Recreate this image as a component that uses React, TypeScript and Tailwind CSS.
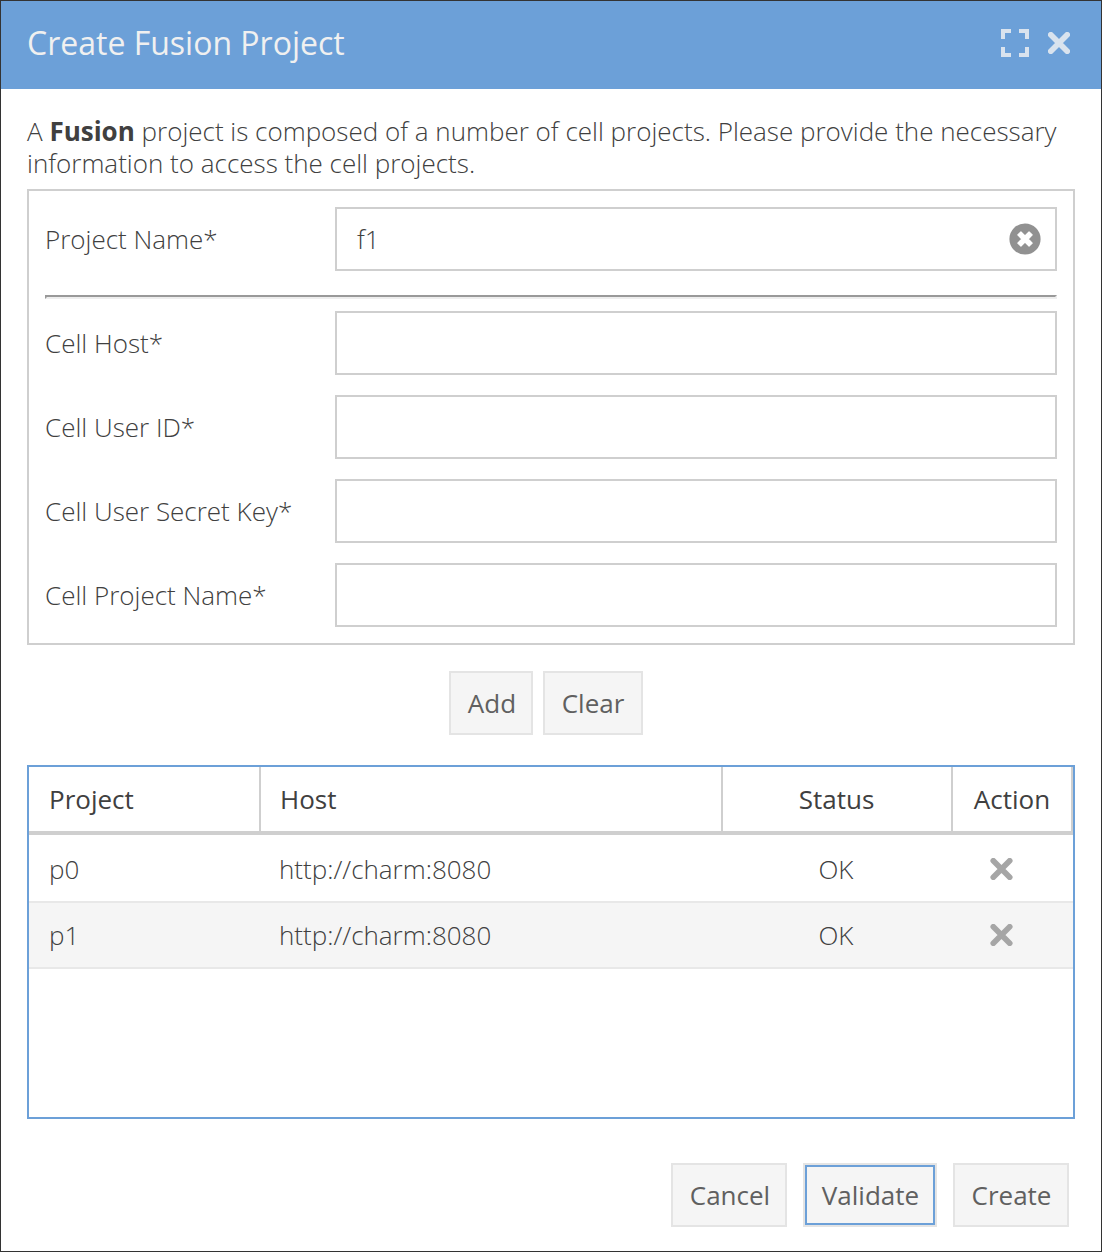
import React from "react";

function Cross({ className, viewBox = "0 0 22 22" }: { className: string; viewBox?: string }) {
  return (
    <svg viewBox={viewBox} className={className} fill="none" stroke="currentColor" strokeWidth="5.7" strokeLinecap="round">
      <path d="M2.8 2.8 19.2 19.2M19.2 2.8 2.8 19.2" />
    </svg>
  );
}

function Expand() {
  return (
    <svg viewBox="0 0 28 28" className="h-7 w-7" fill="none" stroke="currentColor" strokeWidth="4">
      <path d="M2 10V2H10M18 2H26V10M26 18V26H18M10 26H2V18" />
    </svg>
  );
}

function ClearIcon() {
  return (
    <svg viewBox="0 0 32 32" className="h-8 w-8">
      <circle cx="16" cy="16" r="15.6" fill="#919191" />
      <path
        d="M16 12.85 20.05 8.8 23.2 11.95 19.15 16 23.2 20.05 20.05 23.2 16 19.15 11.95 23.2 8.8 20.05 12.85 16 8.8 11.95 11.95 8.8Z"
        fill="#fff"
        stroke="#fff"
        strokeWidth="1.2"
        strokeLinejoin="round"
      />
    </svg>
  );
}

function Field({ label, value }: { label: string; value?: string }) {
  return (
    <div className="flex h-16 items-center">
      <label className="w-[290px] shrink-0 whitespace-nowrap pb-px">{label}</label>
      <div className="flex h-16 flex-1 items-center justify-between border-2 border-[#cfcfcf] bg-white pr-3.5 pl-5">
        {value && (
          <>
            <span className="pb-px">{value}</span>
            <ClearIcon />
          </>
        )}
      </div>
    </div>
  );
}

function Button({
  label,
  className,
  inset = "pl-px",
  focused,
}: {
  label: string;
  className: string;
  inset?: string;
  focused?: boolean;
}) {
  return (
    <button className={`h-16 border-2 border-[#e4e4e4] bg-[#f5f5f5] font-normal text-[#606060] ${className}`}>
      <span
        className={`flex h-full items-center justify-center border-2 pb-px ${inset} ${
          focused ? "border-[#6ca0d8]" : "border-transparent"
        }`}
      >
        {label}
      </span>
    </button>
  );
}

const columns = "grid grid-cols-[232px_462px_230px_120px]";
const rows = [
  { project: "p0", host: "http://charm:8080", status: "OK" },
  { project: "p1", host: "http://charm:8080", status: "OK" },
];

export default function App() {
  return (
    <div className="flex h-[1252px] w-[1102px] flex-col border border-[#333] bg-white font-['Open_Sans',sans-serif] text-[26px] leading-8 font-light text-[#404040]">
      <header className="flex h-[88px] shrink-0 items-center justify-between bg-[#6ca0d8] pr-[31px] pl-[26px]">
        <h1 className="pb-[5px] text-[32px] leading-[43px] font-normal text-[#f0f0f0]">Create Fusion Project</h1>
        <div className="flex items-center gap-[19px] pb-1 text-[#d9e3ee]">
          <Expand />
          <Cross className="h-[22px] w-[22px]" />
        </div>
      </header>

      <main className="flex flex-col px-[26px] pt-[26px]">
        <p className="whitespace-nowrap">
          A <b className="font-bold">Fusion</b> project is composed of a number of cell projects. Please provide the necessary
          <br />
          information to access the cell projects.
        </p>

        <section className="mt-[10px] border-2 border-[#cfcfcf] p-4">
          <Field label="Project Name*" value="f1" />
          <hr className="my-0 mt-6 mb-3 h-1 border-2 border-t-[#999] border-r-[#eee] border-b-[#eee] border-l-[#999]" />
          <div className="flex flex-col gap-5">
            <Field label="Cell Host*" />
            <Field label="Cell User ID*" />
            <Field label="Cell User Secret Key*" />
            <Field label="Cell Project Name*" />
          </div>
        </section>

        <div className="mt-[26px] flex gap-2.5 pl-[422px]">
          <Button label="Add" className="w-[84px]" inset="pl-0.5" />
          <Button label="Clear" className="w-[100px]" inset="pl-0" />
        </div>

        <section className="mt-[30px] h-[354px] border-2 border-[#6ca0d8]">
          <div className={`${columns} h-[68px] border-b-4 border-[#cfcfcf] font-normal`}>
            <div className="border-r-2 border-[#cfcfcf] pt-4 pl-5">Project</div>
            <div className="border-r-2 border-[#cfcfcf] pt-4 pl-[19px]">Host</div>
            <div className="border-r-2 border-[#cfcfcf] pt-4 pr-px text-center">Status</div>
            <div className="border-r-2 border-[#cfcfcf] pt-4 text-center">Action</div>
          </div>
          {rows.map((row, i) => (
            <div
              key={row.project}
              className={`${columns} items-center border-b-2 border-[#e8e8e8] ${i % 2 ? "h-[66px] bg-[#f5f5f5]" : "h-[68px] pt-0.5"}`}
            >
              <div className="pl-5">{row.project}</div>
              <div className="pl-[18px]">{row.host}</div>
              <div className="pr-1 text-center">{row.status}</div>
              <div className="pl-[37px]">
                <Cross className="h-[22px] w-[23px] text-[#a6a6a6]" viewBox="-0.5 0 23 22" />
              </div>
            </div>
          ))}
        </section>

        <div className="mt-11 flex justify-end gap-4 pr-1.5">
          <Button label="Cancel" className="w-[116px]" inset="pl-0.5" />
          <Button label="Validate" className="w-[134px]" focused />
          <Button label="Create" className="w-[116px]" />
        </div>
      </main>
    </div>
  );
}
